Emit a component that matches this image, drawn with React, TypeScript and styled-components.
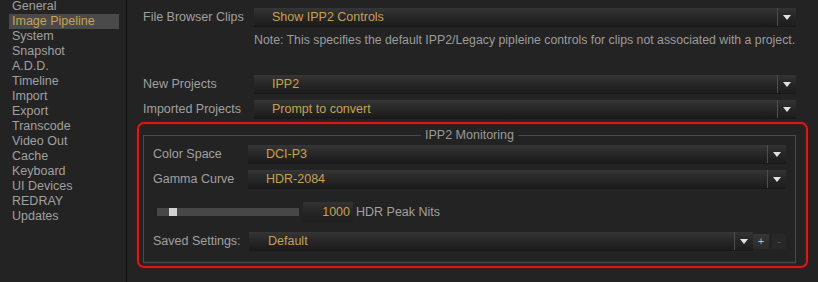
import React from "react";
import styled, { createGlobalStyle } from "styled-components";

const Global = createGlobalStyle`
  html, body { margin: 0; padding: 0; background: #232323; }
  body {
    font-family: "Liberation Sans", Arial, sans-serif;
    font-size: 12.5px;
    color: #a2a2a2;
  }
  * { box-sizing: border-box; }
`;

const gold = "#c9a052";

const Root = styled.div`
  display: flex;
  width: 818px;
  height: 282px;
  overflow: hidden;
  background: #232323;
`;

const Sidebar = styled.nav`
  width: 127px;
  flex: none;
  border-right: 1px solid #0f0f0f;
  display: flex;
  flex-direction: column;
  margin-top: -1px;
`;

const NavItem = styled.div<{ $active?: boolean }>`
  height: 15px;
  line-height: 15px;
  margin-left: 9px;
  width: 110px;
  padding-left: 3px;
  white-space: nowrap;
  color: ${(p) => (p.$active ? gold : "#a0a0a0")};
  background: ${(p) => (p.$active ? "#4a4a4a" : "transparent")};
`;

const Main = styled.main`
  flex: 1;
  min-width: 0;
  display: flex;
  flex-direction: column;
  padding: 8px 10px 0 10px;
`;

const TopRow = styled.div<{ $mt?: number }>`
  display: grid;
  grid-template-columns: 111px minmax(0, 1fr);
  align-items: center;
  padding: 0 12px 0 6px;
  margin-top: ${(p) => p.$mt ?? 0}px;
`;

const Label = styled.div`
  white-space: nowrap;
  color: #a0a0a0;
`;

const Note = styled.div`
  grid-column: 2;
  line-height: 15px;
  white-space: nowrap;
  font-size: 12.3px;
  color: #9c9c9c;
`;

const Select = styled.div`
  height: 18px;
  display: flex;
  align-items: stretch;
  background: linear-gradient(#363636 0%, #2b2b2b 35%, #222 70%, #1b1b1b 100%);
  box-shadow: 0 1px 0 #181818;
  min-width: 0;
  flex: 1;
`;

const SelectValue = styled.div<{ $pl?: number }>`
  flex: 1;
  line-height: 18px;
  padding-left: ${(p) => p.$pl ?? 18}px;
  color: ${gold};
  white-space: nowrap;
`;

const ArrowBox = styled.div`
  width: 19px;
  flex: none;
  border-left: 1px solid #4e4e4e;
  display: flex;
  align-items: center;
  justify-content: center;
  background: linear-gradient(#333 0%, #262626 50%, #1d1d1d 100%);
`;

const Tri = styled.span`
  width: 0;
  height: 0;
  border-left: 4px solid transparent;
  border-right: 4px solid transparent;
  border-top: 5px solid #e2e2e2;
  margin-top: 1px;
`;

const RedBox = styled.div`
  margin-top: 4px;
  height: 146px;
  border: 2px solid #d21c1c;
  box-shadow: 0 0 0 1px rgba(110, 10, 10, 0.55), inset 0 0 0 1px rgba(110, 10, 10, 0.45);
  border-radius: 7px;
  padding: 4px 10px 3px 4px;
  display: flex;
  flex-direction: column;
`;

const Group = styled.fieldset`
  margin: 0;
  flex: 1;
  border: 1px solid #4a4a4a;
  box-shadow: 0 1px 0 #2e2e2e, inset 0 -1px 0 #2b2b2b;
  padding: 3px 9px 0 9px;
  min-width: 0;
  display: flex;
  flex-direction: column;
`;

const Legend = styled.legend`
  margin: 0 auto;
  padding: 0 4px;
  line-height: 14px;
  color: #9a9a9a;
`;

const GroupRow = styled.div<{ $mt?: number }>`
  display: grid;
  grid-template-columns: 95px minmax(0, 1fr);
  align-items: center;
  margin-top: ${(p) => p.$mt ?? 0}px;
`;

const SliderRow = styled.div`
  display: flex;
  align-items: center;
  margin-top: 14px;
  padding-left: 4px;
  height: 20px;
`;

const Track = styled.div`
  width: 142px;
  height: 8px;
  background: #474747;
  display: flex;
  padding-left: 12px;
`;

const Thumb = styled.div`
  width: 8px;
  height: 8px;
  background: #d2d2d2;
`;

const NumBox = styled.div`
  width: 50px;
  height: 20px;
  margin-left: 4px;
  background: linear-gradient(#333 0%, #282828 40%, #1e1e1e 100%);
  color: ${gold};
  text-align: right;
  line-height: 21px;
  padding-right: 3px;
`;

const Unit = styled.span`
  margin-left: 3px;
  color: #a0a0a0;
`;

const SavedControls = styled.div`
  display: flex;
  align-items: center;
  margin-left: 1px;
`;

const MiniBtn = styled.div<{ $dim?: boolean }>`
  flex: none;
  width: ${(p) => (p.$dim ? 14 : 16)}px;
  height: 15px;
  margin-left: ${(p) => (p.$dim ? 3 : 0)}px;
  background: ${(p) => (p.$dim ? "#282828" : "linear-gradient(#363636, #2a2a2a)")};
  color: ${(p) => (p.$dim ? "#5a5a5a" : "#bdbdbd")};
  font-size: 11px;
  line-height: 15px;
  text-align: center;
`;

const Dropdown: React.FC<{ value: string; pl?: number }> = ({ value, pl }) => (
  <Select>
    <SelectValue $pl={pl}>{value}</SelectValue>
    <ArrowBox>
      <Tri />
    </ArrowBox>
  </Select>
);

const navItems = [
  "General",
  "Image Pipeline",
  "System",
  "Snapshot",
  "A.D.D.",
  "Timeline",
  "Import",
  "Export",
  "Transcode",
  "Video Out",
  "Cache",
  "Keyboard",
  "UI Devices",
  "REDRAY",
  "Updates",
];

export default function App() {
  return (
    <>
      <Global />
      <Root>
        <Sidebar>
          {navItems.map((n) => (
            <NavItem key={n} $active={n === "Image Pipeline"}>
              {n}
            </NavItem>
          ))}
        </Sidebar>
        <Main>
          <TopRow>
            <Label>File Browser Clips</Label>
            <Dropdown value="Show IPP2 Controls" />
          </TopRow>
          <TopRow $mt={7}>
            <Note>
              Note: This specifies the default IPP2/Legacy pipleine controls for clips not associated with a project.
            </Note>
          </TopRow>
          <TopRow $mt={27}>
            <Label>New Projects</Label>
            <Dropdown value="IPP2" />
          </TopRow>
          <TopRow $mt={7}>
            <Label>Imported Projects</Label>
            <Dropdown value="Prompt to convert" />
          </TopRow>
          <RedBox>
            <Group>
              <Legend>IPP2 Monitoring</Legend>
              <GroupRow>
                <Label>Color Space</Label>
                <Dropdown value="DCI-P3" />
              </GroupRow>
              <GroupRow $mt={7}>
                <Label>Gamma Curve</Label>
                <Dropdown value="HDR-2084" />
              </GroupRow>
              <SliderRow>
                <Track>
                  <Thumb />
                </Track>
                <NumBox>1000</NumBox>
                <Unit>HDR Peak Nits</Unit>
              </SliderRow>
              <GroupRow $mt={10}>
                <Label>Saved Settings:</Label>
                <SavedControls>
                  <Dropdown value="Default" pl={19} />
                  <MiniBtn>+</MiniBtn>
                  <MiniBtn $dim>-</MiniBtn>
                </SavedControls>
              </GroupRow>
            </Group>
          </RedBox>
        </Main>
      </Root>
    </>
  );
}
